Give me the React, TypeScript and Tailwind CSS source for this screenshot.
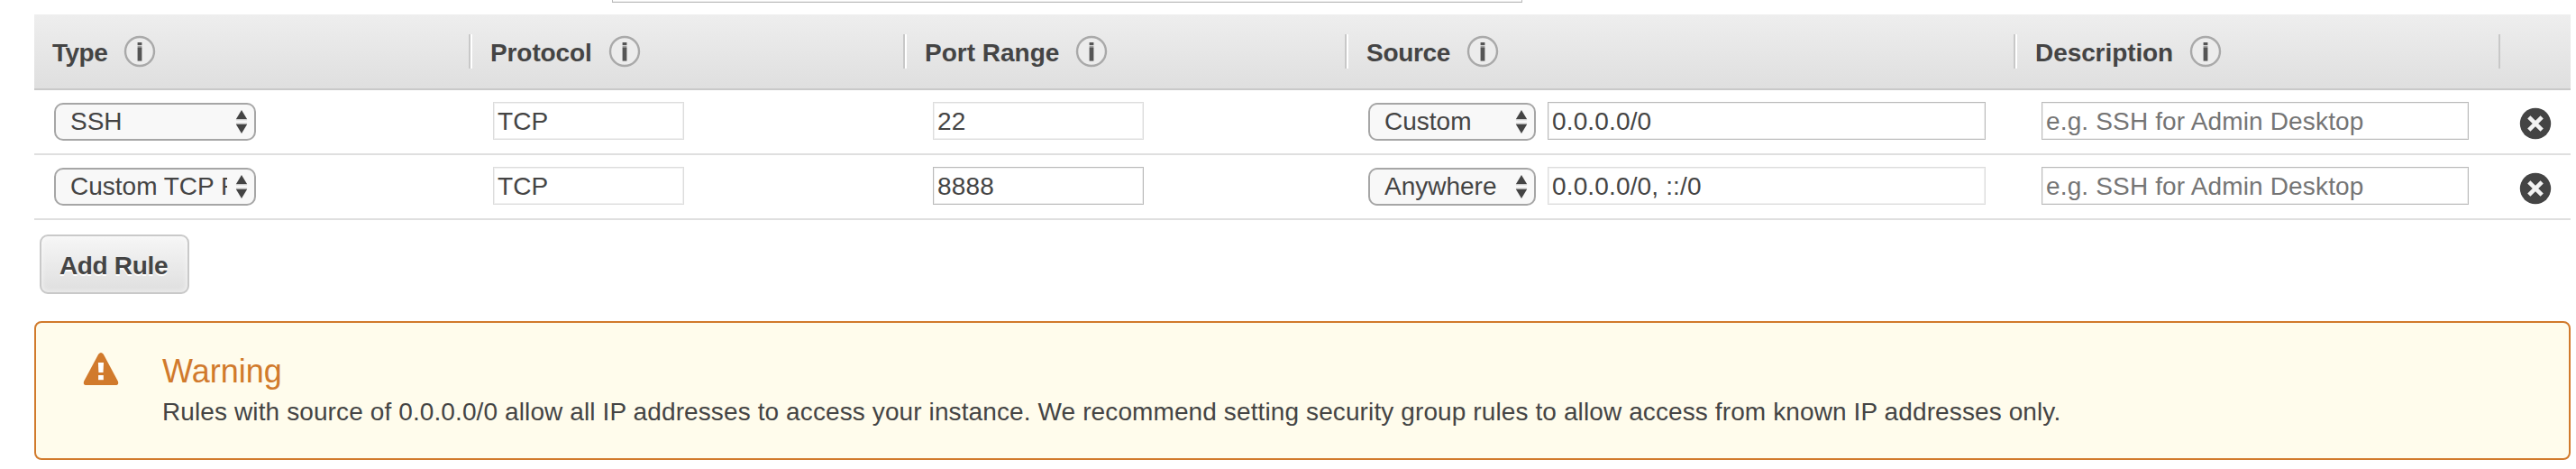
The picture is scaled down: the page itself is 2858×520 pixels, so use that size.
import type { ReactNode } from 'react';

const COLUMNS = 'grid grid-cols-[482px_482px_490px_742px_538px_80px]';

function InfoIcon() {
  return (
    <svg width="36" height="36" viewBox="0 0 36 36" className="shrink-0" aria-hidden="true">
      <circle cx="18" cy="18" r="16" fill="#ececec" stroke="#a9a9a9" strokeWidth="2.4" />
      <rect x="15.6" y="8" width="4.8" height="3.2" fill="#555" />
      <rect x="15.6" y="12.2" width="4.8" height="2" fill="#888" />
      <rect x="15.6" y="14" width="4.8" height="14.6" fill="#555" />
    </svg>
  );
}

function UpDownArrows() {
  return (
    <svg width="14" height="28" viewBox="0 0 14 28" className="shrink-0" aria-hidden="true">
      <path d="M7 1 L13.2 11.3 H0.8 Z" fill="#444" />
      <rect x="1" y="11.4" width="12" height="1" fill="#d0d0d0" />
      <rect x="1" y="15.6" width="12" height="1" fill="#b8b8b8" />
      <path d="M0.8 16.7 H13.2 L7 27 Z" fill="#444" />
    </svg>
  );
}

function RemoveIcon() {
  return (
    <svg width="36" height="36" viewBox="0 0 36 36" aria-hidden="true">
      <circle cx="18" cy="18" r="17.2" fill="#444" />
      <path d="M10.8 10.8 L25.2 25.2 M25.2 10.8 L10.8 25.2" stroke="#f2f2f2" strokeWidth="4.6" />
    </svg>
  );
}

function WarningIcon() {
  return (
    <svg width="40" height="36" viewBox="0 0 40 36" aria-hidden="true">
      <path
        d="M17.2 1.8 Q20 -1.6 22.8 1.8 L38.6 31.2 Q40.6 36 36 36 H4 Q-0.6 36 1.4 31.2 Z"
        fill="#d17a2c"
      />
      <path d="M16.9 11 H23 L22.5 22 H17.4 Z" fill="#fff" />
      <rect x="17.1" y="25" width="5.7" height="5.2" fill="#fff" />
    </svg>
  );
}

function HeaderCell({
  label,
  tracking = '',
  first = false,
}: {
  label: string;
  tracking?: string;
  first?: boolean;
}) {
  return (
    <div className="flex items-center">
      {!first && <span className="flex h-[38px] w-1 border-l-2 border-[#c8c8c8] bg-white" />}
      <span className={`pt-[3px] pl-5 text-[28px] leading-[34px] font-bold ${tracking}`}>{label}</span>
      <span className="ml-[18px]">
        <InfoIcon />
      </span>
    </div>
  );
}

function Select({ value, width, clip }: { value: string; width: string; clip: string }) {
  return (
    <button
      type="button"
      className={`flex h-[42px] items-center justify-between rounded-[10px] border-2 border-[#a6a6a6] bg-[#f8f8f8] pr-[7px] pl-4 ${width}`}
    >
      <span className={`overflow-hidden text-left leading-[38px] whitespace-nowrap ${clip}`}>{value}</span>
      <UpDownArrows />
    </button>
  );
}

function TextBox({
  value,
  placeholder,
  width,
  enabled = false,
  label,
}: {
  value?: string;
  placeholder?: string;
  width: string;
  enabled?: boolean;
  label: string;
}) {
  return (
    <input
      type="text"
      aria-label={label}
      defaultValue={value}
      placeholder={placeholder}
      className={`mb-0.5 block h-[42px] border bg-white px-1 pt-[2px] tracking-[0.15px] shadow-[inset_0_0_0_1px_#f0f0f0] outline-none placeholder:text-[#757575] ${
        enabled ? 'border-[#bbb]' : 'border-[#ddd]'
      } ${width}`}
    />
  );
}

function Cell({ children, pad }: { children: ReactNode; pad: string }) {
  return <div className={`flex items-center ${pad}`}>{children}</div>;
}

interface Rule {
  type: string;
  protocol: string;
  port: string;
  portEnabled: boolean;
  source: string;
  cidr: string;
  cidrEnabled: boolean;
}

const RULES: Rule[] = [
  {
    type: 'SSH',
    protocol: 'TCP',
    port: '22',
    portEnabled: false,
    source: 'Custom',
    cidr: '0.0.0.0/0',
    cidrEnabled: true,
  },
  {
    type: 'Custom TCP Rule',
    protocol: 'TCP',
    port: '8888',
    portEnabled: true,
    source: 'Anywhere',
    cidr: '0.0.0.0/0, ::/0',
    cidrEnabled: false,
  },
];

function RuleRow({ rule }: { rule: Rule }) {
  return (
    <div className={`${COLUMNS} h-[72px] border-b-2 border-[#dfdfdf]`}>
      <Cell pad="pl-[22px]">
        <Select value={rule.type} width="w-[224px]" clip="w-[174px]" />
      </Cell>
      <Cell pad="pl-[27px]">
        <TextBox label="Protocol" value={rule.protocol} width="w-[212px]" />
      </Cell>
      <Cell pad="pl-[33px]">
        <TextBox label="Port Range" value={rule.port} width="w-[234px]" enabled={rule.portEnabled} />
      </Cell>
      <Cell pad="pl-[26px] gap-[13px]">
        <Select value={rule.source} width="w-[186px]" clip="w-[138px]" />
        <TextBox label="Source" value={rule.cidr} width="w-[486px]" enabled={rule.cidrEnabled} />
      </Cell>
      <Cell pad="pl-[31px]">
        <TextBox label="Description" placeholder="e.g. SSH for Admin Desktop" width="w-[474px]" enabled />
      </Cell>
      <Cell pad="pl-[23px] pt-[4px]">
        <button type="button" aria-label="Remove rule">
          <RemoveIcon />
        </button>
      </Cell>
    </div>
  );
}

export default function App() {
  return (
    <main className="h-[520px] w-[2858px] overflow-hidden bg-white pr-1.5 pl-[38px] font-['Liberation_Sans',Arial,sans-serif] text-[28px] text-[#444]">
      <div className="ml-[641px] h-[3px] w-[1010px] border-x border-b border-[#bbb] shadow-[inset_0_-1px_0_#f0f0f0]" />

      <section className="mt-[13px]">
        <div
          className={`${COLUMNS} h-[84px] border-b-2 border-[#c9c9c9] bg-linear-to-b from-[#eeeeee] to-[#dfdfdf]`}
        >
          <HeaderCell label="Type" tracking="tracking-[-0.5px]" first />
          <HeaderCell label="Protocol" tracking="tracking-[-0.1px]" />
          <HeaderCell label="Port Range" />
          <HeaderCell label="Source" tracking="tracking-[-0.3px]" />
          <HeaderCell label="Description" tracking="tracking-[-0.08px]" />
          <div className="flex items-center">
            <span className="h-[38px] w-0.5 bg-[#c8c8c8]" />
          </div>
        </div>
        {RULES.map((rule) => (
          <RuleRow key={rule.type} rule={rule} />
        ))}
      </section>

      <button
        type="button"
        className="mt-4 ml-1.5 flex h-[66px] w-[166px] items-center justify-center rounded-[9px] border-2 border-[#c9c9c9] bg-linear-to-b from-[#f6f6f6] to-[#dfdfdf] pt-[3px] pr-[2px] font-bold tracking-[-0.33px] whitespace-nowrap shadow-[inset_0_0_6px_rgba(255,255,255,0.7)] [text-shadow:0_2px_0_#fff]"
      >
        Add Rule
      </button>

      <section className="mt-[30px] flex h-[154px] rounded-[8px] border-2 border-[#d17a2c] bg-[#fffcec]">
        <div className="mt-[33px] ml-[52px] w-[40px]">
          <WarningIcon />
        </div>
        <div className="mt-[34px] ml-[48px]">
          <h2 className="text-[36px] leading-[40px] text-[#d17a2c]">Warning</h2>
          <p className="mt-[7px] leading-[36px] tracking-[0.11px] whitespace-nowrap">
            Rules with source of 0.0.0.0/0 allow all IP addresses to access your instance. We recommend setting
            security group rules to allow access from known IP addresses only.
          </p>
        </div>
      </section>
    </main>
  );
}
